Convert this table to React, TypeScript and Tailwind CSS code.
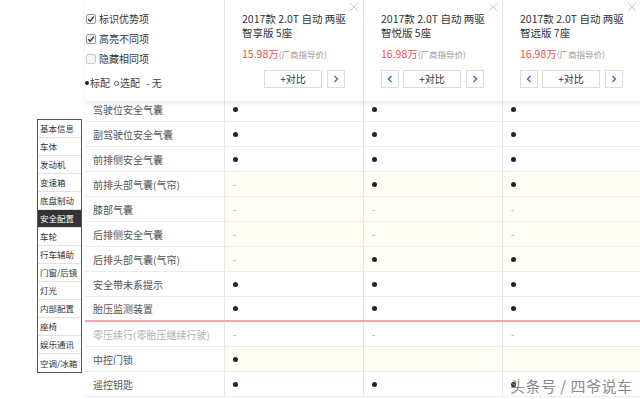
import React from "react";

const navItems = [
  "基本信息",
  "车体",
  "发动机",
  "变速箱",
  "底盘制动",
  "安全配置",
  "车轮",
  "行车辅助",
  "门窗/后镜",
  "灯光",
  "内部配置",
  "座椅",
  "娱乐通讯",
  "空调/冰箱",
];

const cars = [
  { title: "2017款 2.0T 自动 两驱", sub: "智享版 5座", price: "15.98万", prev: false },
  { title: "2017款 2.0T 自动 两驱", sub: "智悦版 5座", price: "16.98万", prev: true },
  { title: "2017款 2.0T 自动 两驱", sub: "智远版 7座", price: "16.98万", prev: true },
];

type Row = { name: string; vals: string[]; diff?: boolean; dim?: boolean; mark?: boolean };

const rows: Row[] = [
  { name: "驾驶位安全气囊", vals: ["●", "●", "●"] },
  { name: "副驾驶位安全气囊", vals: ["●", "●", "●"] },
  { name: "前排侧安全气囊", vals: ["●", "●", "●"] },
  { name: "前排头部气囊(气帘)", vals: ["-", "●", "●"], diff: true },
  { name: "膝部气囊", vals: ["-", "-", "-"], diff: true },
  { name: "后排侧安全气囊", vals: ["-", "-", "-"], diff: true },
  { name: "后排头部气囊(气帘)", vals: ["-", "●", "●"], diff: true },
  { name: "安全带未系提示", vals: ["●", "●", "●"] },
  { name: "胎压监测装置", vals: ["●", "●", "●"], mark: true },
  { name: "零压续行(零胎压继续行驶)", vals: ["-", "-", "-"], dim: true },
  { name: "中控门锁", vals: ["●", "", ""], diff: true },
  { name: "遥控钥匙", vals: ["●", "●", "●"] },
];

const Check = ({ on }: { on: boolean }) => (
  <span
    className={`flex w-[10px] h-[10px] items-center justify-center border rounded-[2px] ${
      on ? "border-[#999] bg-[#f3f3f3]" : "border-[#c8c8c8] bg-[#f6f6f6]"
    }`}
  >
    {on && (
      <svg width="8" height="8" viewBox="0 0 8 8">
        <path d="M1.2 4.2 L3.2 6.2 L6.8 1.6" fill="none" stroke="#333" strokeWidth="1.4" />
      </svg>
    )}
  </span>
);

const Cell = ({ v }: { v: string }) => (
  <div className="w-[139px] shrink-0 h-full border-l border-[#e6e6e6] flex items-center pl-[8px]">
    {v === "●" && <span className="w-[5px] h-[5px] rounded-full bg-[#222]" />}
    {v === "-" && <span className="text-[9px] text-[#999] leading-none">-</span>}
  </div>
);

const App = () => {
  return (
    <div className="relative w-[640px] h-[399px] overflow-hidden bg-white font-['Noto_Sans_CJK_SC','Microsoft_YaHei',sans-serif] text-[#333]">
      <div className="ml-[85px] w-[556px]">
        {/* header */}
        <div className="relative z-10 flex h-[101px] -mb-[4px] bg-white shadow-[0_3px_4px_rgba(0,0,0,0.08)]">
          <div className="w-[139px] shrink-0 pt-[9px] text-[10px] leading-[20px] text-[#333]">
            <label className="flex items-center gap-[3px] pl-[1px]">
              <Check on />
              标识优势项
            </label>
            <label className="flex items-center gap-[3px] pl-[1px]">
              <Check on />
              高亮不同项
            </label>
            <label className="flex items-center gap-[3px] pl-[1px]">
              <Check on={false} />
              隐藏相同项
            </label>
            <div className="mt-[4px] flex items-center text-[#444]">
              <span className="w-[4px] h-[4px] rounded-full bg-[#222] mr-[1px]" />
              标配
              <span className="ml-[4px] mr-[1px] w-[5px] h-[5px] rounded-full border border-[#666]" />
              选配
              <span className="ml-[6px]">- 无</span>
            </div>
          </div>
          {cars.map((c, i) => (
            <div key={i} className="relative w-[139px] shrink-0 border-l border-[#e6e6e6] pt-[12px] pl-[17px]">
              <svg className="absolute right-[4px] top-[2px]" width="10" height="10" viewBox="0 0 10 10">
                <path d="M1 1 L9 9 M9 1 L1 9" stroke="#c8c8c8" strokeWidth="1" />
              </svg>
              <div className="text-[10.5px] leading-[14px] text-[#333] whitespace-nowrap">{c.title}</div>
              <div className="text-[10.5px] leading-[14px] text-[#333]">{c.sub}</div>
              <div className="mt-[6px] flex items-baseline">
                <span className="text-[10.5px] text-[#f05050]">{c.price}</span>
                <span className="text-[8.5px] text-[#999]">(厂商指导价)</span>
              </div>
              <div className="mt-[8px] flex items-center">
                <span
                  className={`flex w-[18px] h-[18px] items-center justify-center border border-[#dcdcdc] ${
                    c.prev ? "" : "invisible"
                  }`}
                >
                  <svg width="6" height="8" viewBox="0 0 6 8">
                    <path d="M4.5 1 L1.5 4 L4.5 7" fill="none" stroke="#2f6fc4" strokeWidth="1.3" />
                  </svg>
                </span>
                <span className="ml-[4px] flex w-[58px] h-[18px] items-center justify-center border border-[#dcdcdc] text-[10px] text-[#333]">
                  +对比
                </span>
                <span className="ml-[5px] flex w-[18px] h-[18px] items-center justify-center border border-[#dcdcdc]">
                  <svg width="6" height="8" viewBox="0 0 6 8">
                    <path d="M1.5 1 L4.5 4 L1.5 7" fill="none" stroke="#2f6fc4" strokeWidth="1.3" />
                  </svg>
                </span>
              </div>
            </div>
          ))}
        </div>

        {/* table */}
        <div>
          {rows.map((r, i) => (
            <div
              key={i}
              className={`flex h-[25px] ${
                r.mark ? "border-b-2 border-[#f5a9ab]" : "border-b border-[#ececec]"
              }`}
            >
              <div
                className={`w-[139px] shrink-0 flex items-center pl-[8px] text-[10px] whitespace-nowrap ${
                  r.dim ? "text-[#b0b0b0]" : "text-[#555]"
                }`}
              >
                {r.name}
              </div>
              <div className={`flex ${r.diff ? "bg-[#fffdf4]" : "bg-white"}`}>
                {r.vals.map((v, j) => (
                  <Cell key={j} v={v} />
                ))}
              </div>
            </div>
          ))}
        </div>
      </div>

      {/* side nav */}
      <div className="absolute left-[37px] top-[119px] w-[45px] border border-[#555] bg-white">
        {navItems.map((n, i) => (
          <div
            key={i}
            className={`h-[18px] flex items-center pl-[2px] text-[8.5px] whitespace-nowrap ${
              i < navItems.length - 1 ? "border-b border-[#e2e2e2]" : ""
            } ${n === "安全配置" ? "bg-[#333] text-white" : "text-[#333]"}`}
          >
            {n}
          </div>
        ))}
      </div>

      {/* watermark */}
      <div className="absolute left-[510px] top-[375px] text-[15px] text-[#8a8a8a] tracking-[0.5px]">
        头条号 / 四爷说车
      </div>
    </div>
  );
};

export default App;
